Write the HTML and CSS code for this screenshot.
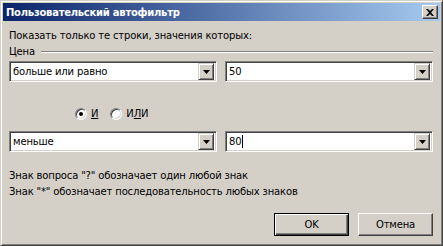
FILE: index.html
```html
<!DOCTYPE html>
<html lang="ru">
<head>
    <meta charset="UTF-8">
    <title>Пользовательский автофильтр</title>
    <link rel="stylesheet" href="styles.css">
</head>
<body>
    <div class="window">
        <!-- заголовок окна -->
        <div class="titlebar">
            <span class="title">Пользовательский автофильтр</span>
            <span class="close">
                <svg width="8" height="7" viewBox="0 0 8 7"><path d="M0 0h2l2 2 2-2h2L5 3.5 8 7H6L4 5 2 7H0l3-3.5z" fill="#000"/></svg>
            </span>
        </div>

        <div class="content">
            <div class="prompt">Показать только те строки, значения которых:</div>
            <div class="group"><span>Цена</span><span class="rule"></span></div>

            <div class="row">
                <div class="combo"><span class="value">больше или равно</span><span class="drop"><svg width="7" height="4" viewBox="0 0 7 4"><path d="M0 0h7L3.5 4z" fill="#000"/></svg></span></div>
                <div class="combo"><span class="value">50</span><span class="drop"><svg width="7" height="4" viewBox="0 0 7 4"><path d="M0 0h7L3.5 4z" fill="#000"/></svg></span></div>
            </div>

            <div class="logic">
                <label class="option"><span class="radio checked"></span><span><u>И</u></span></label>
                <label class="option"><span class="radio"></span><span>И<u>Л</u>И</span></label>
            </div>

            <div class="row row-second">
                <div class="combo"><span class="value">меньше</span><span class="drop"><svg width="7" height="4" viewBox="0 0 7 4"><path d="M0 0h7L3.5 4z" fill="#000"/></svg></span></div>
                <div class="combo"><span class="value">80<span class="caret"></span></span><span class="drop"><svg width="7" height="4" viewBox="0 0 7 4"><path d="M0 0h7L3.5 4z" fill="#000"/></svg></span></div>
            </div>

            <div class="hints">
                <div>Знак вопроса "?" обозначает один любой знак</div>
                <div>Знак "*" обозначает последовательность любых знаков</div>
            </div>

            <div class="buttons">
                <button class="btn default">OK</button>
                <button class="btn">Отмена</button>
            </div>
        </div>
    </div>
</body>
</html>
```

FILE: styles.css
```css
/* окно в стиле Windows Classic */
body {
    margin: 0;
    font-family: "DejaVu Sans", Verdana, sans-serif;
    font-size: 10px;
    letter-spacing: -0.15px;
    color: #000;
    background: #d4d0c8;
}

.window {
    width: 443px;
    height: 246px;
    box-sizing: border-box;
    background: #d4d0c8;
    border: 1px solid;
    border-color: #d4d0c8 #404040 #404040 #d4d0c8;
    box-shadow: inset 1px 1px #fff, inset -1px -1px #808080;
    padding: 2px;
}

.titlebar {
    height: 18px;
    display: flex;
    align-items: center;
    justify-content: space-between;
    padding: 0 2px 0 3px;
    background: linear-gradient(to right, #0a246a, #a6caf0);
}

.title {
    color: #fff;
    font-weight: bold;
    font-size: 10px;
    letter-spacing: -0.25px;
}

.close {
    width: 16px;
    height: 14px;
    box-sizing: border-box;
    display: flex;
    align-items: center;
    justify-content: center;
    background: #d4d0c8;
    border: 1px solid;
    border-color: #fff #404040 #404040 #fff;
    box-shadow: inset -1px -1px #808080;
}

.content {
    padding: 0 7px 0 6px;
    line-height: 13px;
}

.prompt {
    margin-top: 8px;
}

.group {
    margin-top: 3px;
    display: flex;
    align-items: center;
    gap: 6px;
}

.rule {
    flex: 1;
    height: 0;
    border-top: 1px solid #808080;
    border-bottom: 1px solid #fff;
}

/* выпадающие списки */
.row {
    margin-top: 3px;
    display: grid;
    grid-template-columns: 1fr 1fr;
    gap: 8px;
}

.row-second {
    margin-top: 11px;
}

.combo {
    height: 21px;
    box-sizing: border-box;
    display: flex;
    align-items: center;
    background: #fff;
    border: 1px solid;
    border-color: #808080 #fff #fff #808080;
    box-shadow: inset 1px 1px #404040, inset -1px -1px #d4d0c8;
    padding: 1px 2px 1px 1px;
}

.value {
    flex: 1;
    padding-left: 2px;
    display: flex;
    align-items: center;
}

.caret {
    width: 1px;
    height: 13px;
    margin-left: 1px;
    background: #000;
}

.drop {
    width: 16px;
    height: 17px;
    box-sizing: border-box;
    display: flex;
    align-items: center;
    justify-content: center;
    background: #d4d0c8;
    border: 1px solid;
    border-color: #d4d0c8 #404040 #404040 #d4d0c8;
    box-shadow: inset 1px 1px #fff, inset -1px -1px #808080;
}

/* И / ИЛИ */
.logic {
    margin-top: 25px;
    padding-left: 66px;
    display: flex;
    gap: 12px;
    height: 13px;
}

.option {
    display: flex;
    align-items: center;
    gap: 4px;
}

.radio {
    width: 12px;
    height: 12px;
    box-sizing: border-box;
    border-radius: 50%;
    border: 1px solid;
    border-color: #808080 #fff #fff #808080;
    box-shadow: inset 1px 1px #404040, inset -1px -1px #d4d0c8;
    background: #fff;
    display: flex;
    align-items: center;
    justify-content: center;
}

.radio.checked::after {
    content: "";
    width: 4px;
    height: 4px;
    border-radius: 50%;
    background: #000;
}

.hints {
    margin-top: 16px;
    line-height: 16px;
}

/* кнопки */
.buttons {
    margin-top: 13px;
    display: flex;
    justify-content: flex-end;
    gap: 9px;
}

.btn {
    width: 75px;
    height: 23px;
    box-sizing: border-box;
    font-family: inherit;
    font-size: 10px;
    letter-spacing: inherit;
    color: #000;
    background: #d4d0c8;
    border: 1px solid;
    border-color: #fff #404040 #404040 #fff;
    box-shadow: inset -1px -1px #808080;
    padding: 0;
}

.btn.default {
    border: 1px solid #000;
    box-shadow: inset 1px 1px #fff, inset -1px -1px #404040, inset -2px -2px #808080;
}
```
